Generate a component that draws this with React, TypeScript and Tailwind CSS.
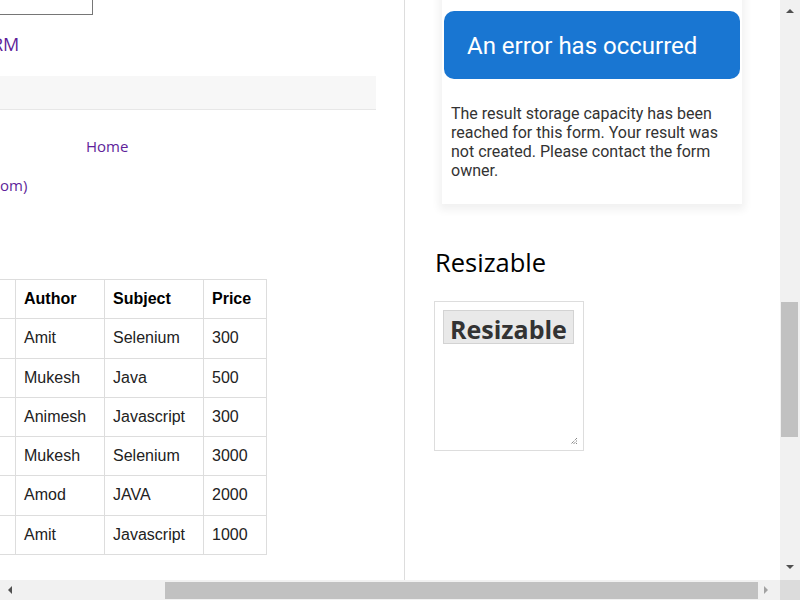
import React from "react";

const books = [
  { id: 1, author: "Amit", subject: "Selenium", price: "300" },
  { id: 2, author: "Mukesh", subject: "Java", price: "500" },
  { id: 3, author: "Animesh", subject: "Javascript", price: "300" },
  { id: 4, author: "Mukesh", subject: "Selenium", price: "3000" },
  { id: 5, author: "Amod", subject: "JAVA", price: "2000" },
  { id: 6, author: "Amit", subject: "Javascript", price: "1000" },
];

const cell = "border border-[#dddddd] px-2 py-2 text-left align-top leading-[22.25px]";

function BookTable() {
  return (
    <table className="-ml-[155px] mt-[84px] border-collapse font-['Liberation_Sans',Arial,sans-serif] text-[16px] text-[#222]">
      <thead>
        <tr>
          <th className={`${cell} w-[170px]`}>&nbsp;</th>
          <th className={`${cell} w-[89px] font-bold text-black`}>Author</th>
          <th className={`${cell} w-[99px] font-bold text-black`}>Subject</th>
          <th className={`${cell} w-[63px] font-bold text-black`}>Price</th>
        </tr>
      </thead>
      <tbody>
        {books.map((b) => (
          <tr key={b.id}>
            <td className={cell}>&nbsp;</td>
            <td className={cell}>{b.author}</td>
            <td className={cell}>{b.subject}</td>
            <td className={cell}>{b.price}</td>
          </tr>
        ))}
      </tbody>
    </table>
  );
}

function ErrorCard() {
  return (
    <div className="-mt-[20px] ml-[37px] w-[300px] bg-white pt-[31px] shadow-[0_3px_8px_3px_rgba(0,0,0,0.06)] font-['Roboto',sans-serif]">
      <div className="mx-[2px] flex h-[68px] items-center rounded-[10px] bg-[#1976d2] pl-[23px] pt-[2px]">
        <span className="text-[24px] leading-[32px] text-white">An error has occurred</span>
      </div>
      <p className="px-[9px] pt-[25px] pb-[24px] text-[16px] leading-[19px] text-[#333]">
        The result storage capacity has been reached for this form. Your result was not created. Please contact the form owner.
      </p>
    </div>
  );
}

function ResizableBox() {
  return (
    <div className="relative ml-[29px] mt-[23px] h-[150px] w-[150px] border border-[#dddddd] p-[8px]">
      <div className="inline-block h-[34px] border border-[#d3d3d3] bg-[#e9e9e9] px-[6px] pt-[4px] font-['Open_Sans',sans-serif] text-[25px] font-bold leading-[28px] text-[#333]">
        Resizable
      </div>
      <svg className="absolute bottom-[5px] right-[5px]" width="8" height="8" viewBox="0 0 8 8">
        <path d="M7 1 L1 7 M7 3.5 L3.5 7 M7 6 L6 7" stroke="#555" strokeWidth="1" strokeDasharray="1 1" />
      </svg>
    </div>
  );
}

function VScrollbar() {
  return (
    <div className="flex h-[580px] w-[20px] flex-col bg-[#f1f1f1]">
      <div className="flex h-[22px] items-center justify-center">
        <div className="h-0 w-0 border-x-[4px] border-b-[4px] border-x-transparent border-b-[#505050]" />
      </div>
      <div className="ml-[1px] mt-[280px] h-[135px] w-[17px] bg-[#c1c1c1]" />
      <div className="flex-1" />
      <div className="flex h-[26px] items-center justify-center">
        <div className="h-0 w-0 border-x-[4px] border-t-[4px] border-x-transparent border-t-[#505050]" />
      </div>
    </div>
  );
}

function HScrollbar() {
  return (
    <div className="flex h-[20px] w-[800px]">
      <div className="flex h-[20px] w-[780px] items-center bg-[#f1f1f1]">
        <div className="ml-[8px] h-0 w-0 border-y-[4px] border-r-[4px] border-y-transparent border-r-[#505050]" />
        <div className="ml-[153px] h-[17px] w-[593px] bg-[#c1c1c1]" />
        <div className="ml-[6px] h-0 w-0 border-y-[4px] border-l-[4px] border-y-transparent border-l-[#a3a3a3]" />
      </div>
      <div className="h-[20px] w-[20px] bg-[#dcdcdc]" />
    </div>
  );
}

export default function App() {
  return (
    <div className="flex h-[600px] w-[800px] flex-col overflow-hidden bg-white">
      <div className="flex h-[580px]">
        <div className="h-[580px] w-[405px] shrink-0 overflow-hidden border-r border-[#dddddd] font-['Open_Sans',sans-serif]">
          <div className="h-[15px] w-[93px] border-b border-r border-[#767676]" />
          <div className="-ml-[8px] mt-[17px] text-[18px] leading-[24px] text-[#601f9a]">RM</div>
          <div className="mt-[20px] h-[34px] w-[376px] border-b border-[#e7e7e7] bg-[#f7f7f7]" />
          <div className="ml-[86px] mt-[26px] text-[15px] leading-[20px] text-[#601f9a]">Home</div>
          <div className="mt-[19px] text-[15px] leading-[20px] text-[#601f9a]">om)</div>
          <BookTable />
        </div>
        <div className="h-[580px] w-[375px] overflow-hidden">
          <ErrorCard />
          <h2 className="ml-[30px] mt-[43px] font-['Open_Sans',sans-serif] text-[25.5px] leading-[30.6px] text-black">
            Resizable
          </h2>
          <ResizableBox />
        </div>
        <VScrollbar />
      </div>
      <HScrollbar />
    </div>
  );
}
